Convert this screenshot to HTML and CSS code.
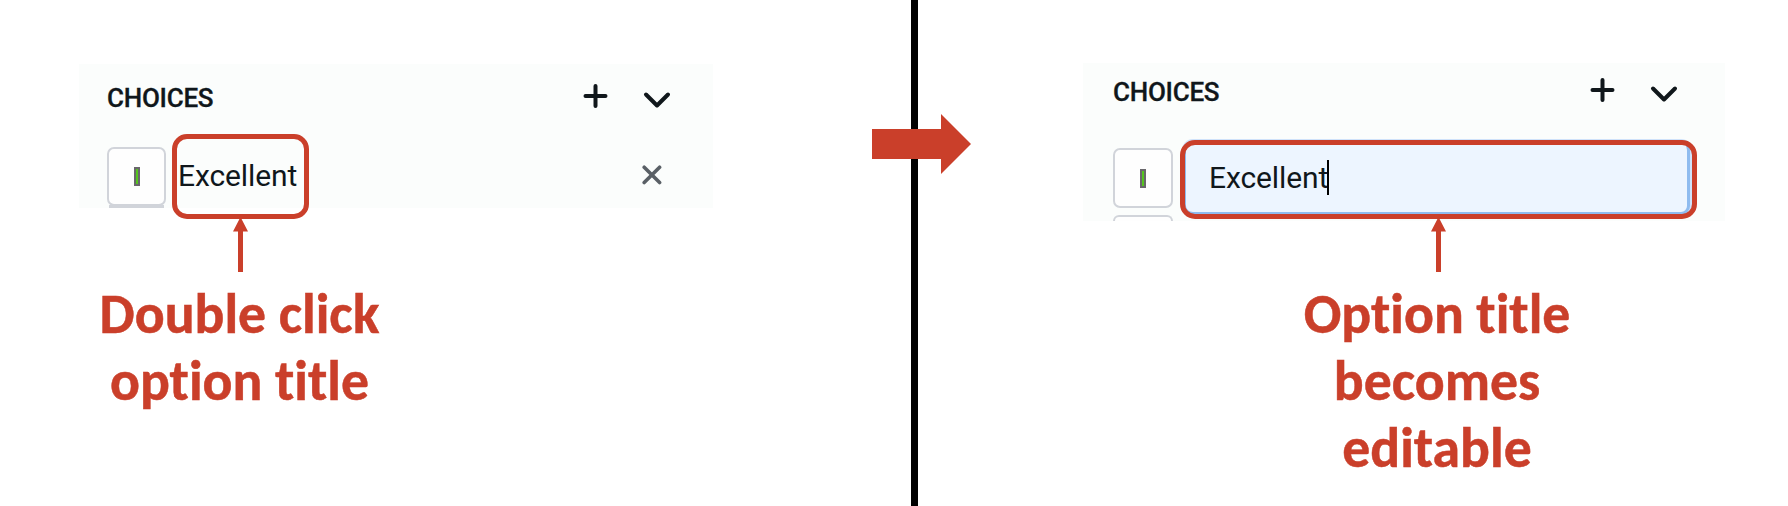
FILE: index.html
```html
<!DOCTYPE html>
<html lang="en">
<head>
<meta charset="utf-8">
<title>Edit an option title</title>
<link rel="stylesheet" href="styles.css">
</head>
<body>
<main class="comparison">
  <section class="side before">
    <div class="panel">
      <header class="panel-head">
        <h2 class="heading">CHOICES</h2>
        <svg class="actions" width="90" height="32" viewBox="-10 0 90 32">
          <path d="M-5.5 16h20M4.5 6v20M55 14.5l11 11 11-11"/>
        </svg>
      </header>
      <div class="row">
        <div class="chip"><i class="swatch"></i></div>
        <span class="option">Excellent</span>
        <svg class="remove" width="20" height="20" viewBox="0 0 20 20"><path d="M2.2 2.2l15.4 15.4M17.6 2.2L2.2 17.6"/></svg>
      </div>
      <div class="chip next"></div>
      <div class="highlight"></div>
    </div>
    <svg class="pointer" width="15" height="55" viewBox="0 0 15 55"><path d="M7.5 0L15 14.5h-5V55H5V14.5H0z"/></svg>
    <p class="caption">Double click<br>option title</p>
  </section>
  <div class="divider"></div>
  <section class="side after">
    <div class="panel">
      <header class="panel-head">
        <h2 class="heading">CHOICES</h2>
        <svg class="actions" width="90" height="32" viewBox="-10 0 90 32">
          <path d="M-5.5 16h20M4.5 6v20M55 14.5l11 11 11-11"/>
        </svg>
      </header>
      <div class="row">
        <div class="chip"><i class="swatch"></i></div>
        <div class="field"><span class="option">Excellent</span><i class="caret"></i></div>
      </div>
      <div class="chip next"></div>
      <div class="highlight"></div>
    </div>
    <svg class="pointer" width="15" height="55" viewBox="0 0 15 55"><path d="M7.5 0L15 14.5h-5V55H5V14.5H0z"/></svg>
    <p class="caption">Option title<br>becomes<br>editable</p>
  </section>
  <svg class="transition" width="99" height="60" viewBox="0 0 99 60"><path d="M0 15h69V0l30 30-30 30V45H0z"/></svg>
</main>
</body>
</html>
```
FILE: styles.css
```css
* { box-sizing: border-box; }
body { margin: 0; background: #fff; font-family: Roboto, "Liberation Sans", sans-serif; }
.comparison { position: relative; display: flex; width: 1788px; height: 506px; overflow: hidden; }
.side { display: flex; flex-direction: column; align-items: flex-start; }
.before { width: 911px; padding: 64px 0 0 79px; }
.after { width: 870px; padding: 63px 0 0 165px; }
.divider { width: 7px; background: #000; }
.panel { position: relative; background: #fbfdfc; }
.before .panel { width: 634px; height: 144px; padding: 16px 40px 0 28px; }
.after .panel { width: 642px; height: 158px; padding: 11px 45px 0 30px; }
.panel-head { display: flex; justify-content: space-between; height: 36px; }
.heading { margin: 0; padding-top: 2px; font-size: 26px; line-height: 32px; font-weight: 500; letter-spacing: -.25px; color: #10171b; -webkit-text-stroke: .3px #10171b; }
.actions { flex: none; margin-right: 2px; fill: none; stroke: #10171b; stroke-width: 4; stroke-linecap: round; stroke-linejoin: round; }
.row { display: flex; align-items: center; height: 60px; }
.before .row { margin-top: 30px; }
.after .row { margin-top: 38px; }
.chip { display: grid; place-items: center; flex: none; width: 59px; height: 60px; border: 2px solid #d1d4da; border-radius: 7px; background: #fefefe; }
.after .chip { width: 60px; }
.before .row .chip { height: 59px; }
.swatch { width: 6px; height: 19px; border: 2px solid #69676b; background: #55c51e; }
.option { font-size: 30px; line-height: 40px; letter-spacing: -.1px; color: #10171b; }
.before .option { margin-left: 12px; }
.remove { margin: -2px 11px 0 auto; fill: none; stroke: #5a6066; stroke-width: 3.6; stroke-linecap: round; }
.next { border-bottom: 0; border-radius: 7px 7px 0 0; }
.before .next { height: 3px; width: 55px; margin: -1px 0 0 2px; background: #d1d4da; border-radius: 0; }
.after .next { height: 6px; margin-top: 7px; }
.field { display: flex; align-items: center; flex: none; width: 506px; height: 74px; margin: 0 0 0 11px; padding-left: 23px; border: solid #8fbbef; border-width: 2px 3px 3px 2px; border-radius: 9px; background: #edf5ff; box-shadow: 0 0 0 2px #cfe2fa; }
.caret { width: 2px; height: 35px; margin-left: -1px; background: #000; }
.highlight { position: absolute; border: 5px solid #ca3f2a; border-radius: 15px; }
.before .highlight { left: 93px; top: 70px; width: 137px; height: 85px; }
.after .highlight { left: 97px; top: 77px; width: 517px; height: 79px; }
.pointer { position: relative; display: block; fill: #ca3f2a; }
.before .pointer { margin: 9px 0 0 154px; }
.after .pointer { margin: -4px 0 0 348px; }
.caption { margin: 9px 0 0; text-align: center; font-family: Carlito, Lato, sans-serif; font-weight: 700; font-size: 55.7px; line-height: 67px; font-variant-ligatures: none; color: #ca3f2a; -webkit-text-stroke: .5px #ca3f2a; }
.before .caption { width: 321px; }
.after .caption { width: 708px; }
.transition { position: absolute; left: 872px; top: 114px; fill: #ca3f2a; }
```
